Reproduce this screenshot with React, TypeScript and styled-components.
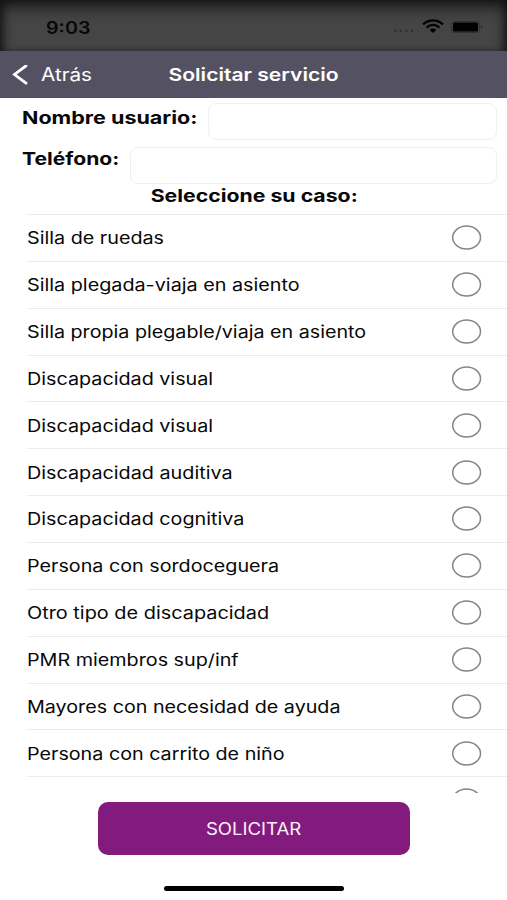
import React from 'react';
import styled, { createGlobalStyle } from 'styled-components';

const GlobalStyle = createGlobalStyle`
  html, body { margin: 0; padding: 0; background: #fff; }
  * { box-sizing: border-box; }
`;

const Screen = styled.div`
  width: 507px;
  height: 900px;
  overflow: hidden;
  display: flex;
  flex-direction: column;
  background: #fff;
  color: #080808;
  font-family: Inter, "Liberation Sans", sans-serif;
`;

const Label = styled.span<{ $size: number; $stretch: number; $weight?: number; $origin?: string }>`
  display: inline-block;
  white-space: nowrap;
  font-size: ${p => p.$size}px;
  font-weight: ${p => p.$weight ?? 400};
  line-height: 20px;
  transform: scaleX(${p => p.$stretch});
  transform-origin: ${p => p.$origin ?? 'left'} center;
`;

const StatusBar = styled.header`
  flex: none;
  height: 51px;
  padding: 4px 24px 0 46px;
  display: flex;
  align-items: center;
  justify-content: space-between;
  background: #454545;
  box-shadow: inset 0 9px 16px -3px #111, inset 7px 0 10px -5px #181818, inset -7px 0 10px -5px #181818;
`;

const StatusIcons = styled.svg`
  display: block;
  width: 92px;
  height: 20px;
`;

const NavBar = styled.nav`
  flex: none;
  height: 46.5px;
  padding-top: 1px;
  display: grid;
  grid-template-columns: 1fr 170px 1fr;
  align-items: center;
  background: #545262;
  color: #fff;
`;

const BackButton = styled.button`
  display: flex;
  align-items: center;
  gap: 13px;
  padding: 0 0 0 12px;
  border: 0;
  background: none;
  color: inherit;
  font-family: inherit;
`;

const NavTitle = styled.h1`
  margin: 0;
  display: flex;
  justify-content: center;
`;

const Form = styled.form`
  flex: none;
  height: 116.5px;
  padding: 5px 10px 0 22px;
`;

const Field = styled.label<{ $labelWidth: number }>`
  display: grid;
  grid-template-columns: ${p => p.$labelWidth}px 1fr;
  height: 37px;
  margin-bottom: 7.5px;
`;

const FieldLabel = styled.span<{ $top: number }>`
  padding-top: ${p => p.$top}px;
`;

const Input = styled.input`
  width: 100%;
  height: 37px;
  border: 1px solid #f0f0f0;
  border-radius: 8px;
  background: #fff;
  outline: none;
`;

const Prompt = styled.div`
  display: flex;
  justify-content: center;
  margin: -6px 0 0 -11px;
`;

const List = styled.ul`
  flex: none;
  height: 579px;
  margin: 0;
  padding: 0 0 0 27px;
  overflow: hidden;
  list-style: none;
`;

const Row = styled.li`
  height: 46.87px;
  padding: 0.8px 26px 0 0;
  display: flex;
  align-items: center;
  justify-content: space-between;
  border-top: 1px solid #ebebeb;
`;

const RadioIcon = styled.svg`
  display: block;
  width: 30px;
  height: 25px;
  margin: -1px -1px 0 0;
`;

const Footer = styled.footer`
  flex: 1;
  display: flex;
  flex-direction: column;
  align-items: center;
  padding-top: 9px;
`;

const Submit = styled.button`
  width: 312px;
  height: 53px;
  border: 0;
  border-radius: 10px;
  background: #831b7e;
  color: #fdf0fc;
  font-family: inherit;
`;

const HomeIndicator = styled.div`
  width: 180px;
  height: 5px;
  margin-top: 31px;
  border-radius: 3px;
  background: #000;
`;

const options: { text: string; stretch: number }[] = [
  { text: 'Silla de ruedas', stretch: 1.19 },
  { text: 'Silla plegada-viaja en asiento', stretch: 1.192 },
  { text: 'Silla propia plegable/viaja en asiento', stretch: 1.187 },
  { text: 'Discapacidad visual', stretch: 1.19 },
  { text: 'Discapacidad visual', stretch: 1.19 },
  { text: 'Discapacidad auditiva', stretch: 1.192 },
  { text: 'Discapacidad cognitiva', stretch: 1.19 },
  { text: 'Persona con sordoceguera', stretch: 1.189 },
  { text: 'Otro tipo de discapacidad', stretch: 1.198 },
  { text: 'PMR miembros sup/inf', stretch: 1.19 },
  { text: 'Mayores con necesidad de ayuda', stretch: 1.188 },
  { text: 'Persona con carrito de niño', stretch: 1.188 },
  { text: '', stretch: 1.19 },
];

function Radio() {
  return (
    <RadioIcon viewBox="0 0 30 25">
      <ellipse cx="14.600" cy="12.500" rx="13.900" ry="11.500" fill="none" stroke="#858585" strokeWidth="1.500" />
    </RadioIcon>
  );
}

export default function App() {
  return (
    <>
      <GlobalStyle />
      <Screen>
        <StatusBar>
          <Label $size={17} $stretch={1.16} $weight={600}>9:03</Label>
          <StatusIcons viewBox="0 0 92 20">
            <g fill="#303030">
              <circle cx="4.500" cy="12.700" r="1.200" />
              <circle cx="10" cy="12.700" r="1.200" />
              <circle cx="15.500" cy="12.700" r="1.200" />
              <circle cx="21" cy="12.700" r="1.200" />
            </g>
            <g fill="none" stroke="#000" strokeWidth="2.300">
              <path d="M32 6.400C38 1.100 46 1.100 52 6.400" />
              <path d="M35.500 9.600C39.500 6.300 44.500 6.300 48.500 9.600" />
            </g>
            <path d="M38.600 11.800C40.500 10.200 43.500 10.200 45.400 11.800L42 15Z" fill="#000" />
            <rect x="60.500" y="3.500" width="28" height="11" rx="3" fill="none" stroke="#303030" />
            <rect x="62" y="4.500" width="25" height="9" rx="1.500" fill="#000" />
            <path d="M90 7Q92 9 90 11Z" fill="#242424" />
          </StatusIcons>
        </StatusBar>
        <NavBar>
          <BackButton type="button">
            <svg width="16" height="20" viewBox="0 0 16 20">
              <path d="M14 0.800L2.500 9.500L14 18.200" fill="none" stroke="#fff" strokeWidth="2.800" strokeLinecap="round" strokeLinejoin="miter" />
            </svg>
            <Label $size={18} $stretch={1.15}>Atrás</Label>
          </BackButton>
          <NavTitle><Label $size={17.5} $stretch={1.205} $weight={600} $origin="center">Solicitar servicio</Label></NavTitle>
        </NavBar>
        <Form>
          <Field $labelWidth={186}>
            <FieldLabel $top={5}><Label $size={17.5} $stretch={1.23} $weight={700}>Nombre usuario:</Label></FieldLabel>
            <Input aria-label="Nombre usuario" />
          </Field>
          <Field $labelWidth={108}>
            <FieldLabel $top={1.5}><Label $size={17.5} $stretch={1.205} $weight={700}>Teléfono:</Label></FieldLabel>
            <Input aria-label="Teléfono" />
          </Field>
          <Prompt><Label $size={17.5} $stretch={1.215} $weight={700} $origin="center">Seleccione su caso:</Label></Prompt>
        </Form>
        <List>
          {options.map((option, i) => (
            <Row key={i}>
              <Label $size={16.6} $stretch={option.stretch}>{option.text}</Label>
              <Radio />
            </Row>
          ))}
        </List>
        <Footer>
          <Submit type="button"><Label $size={16.6} $stretch={1.12} $origin="center">SOLICITAR</Label></Submit>
          <HomeIndicator />
        </Footer>
      </Screen>
    </>
  );
}
